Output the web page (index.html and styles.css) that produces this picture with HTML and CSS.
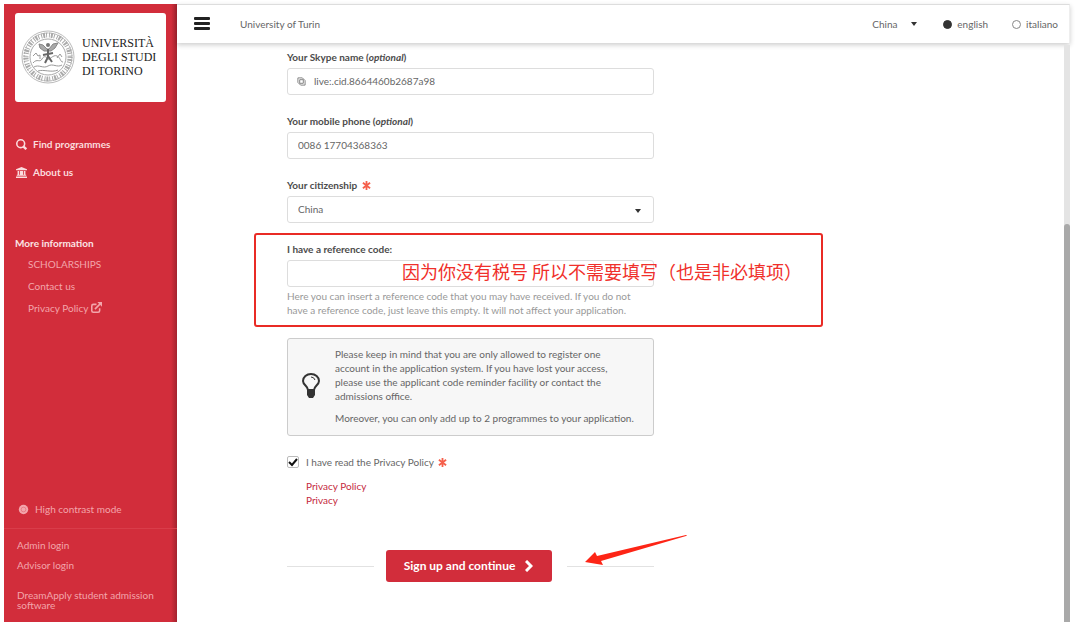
FILE: index.html
```html
<!DOCTYPE html>
<html lang="en">
<head>
    <meta charset="utf-8">
    <title>University of Turin</title>
    <link rel="stylesheet" href="styles.css">
</head>
<body>
<div class="app">
    <aside class="sidebar">
        <a href="#" class="logo">
            <svg class="seal" viewBox="0 0 54 54" fill="none" stroke="#999">
                <circle cx="27" cy="27" r="26" stroke-width="1" stroke="#bbb"/>
                <circle cx="27" cy="27" r="22" stroke-width="5" stroke="#aaa" stroke-dasharray="1 1 2 1 1 2"/>
                <circle cx="27" cy="27" r="24" stroke-width="1" stroke="#aaa" stroke-dasharray="2 1"/>
                <circle cx="27" cy="27" r="18" stroke-width="1" stroke="#aaa"/>
                <path d="M12 33c4-5 7 0 9-4s5-2 6 0 5-5 9-3 3 6 6 6M13 37c5-3 9 2 14-1s9 2 14-1M17 41c6-2 13 2 20-1" stroke-width="1"/>
                <path d="M18 14l4 1 4 4 2 0 4-5 5-1-3 5-4 3-7 0-4-3z" fill="#aaa" stroke="#888"/>
                <path d="M27 19v8l-3 6M27 26l4 6M22 25l10-2" stroke="#666" stroke-width="2"/>
                <circle cx="27" cy="15" r="2" fill="#777" stroke="none"/>
                <path d="M12 26l3-3 2 3 2-1v4M36 28l3-4 2 3" stroke-width="1"/>
            </svg>
            <span class="logo-text">UNIVERSITÀ<br>DEGLI STUDI<br>DI TORINO</span>
        </a>
        <nav class="main-nav">
            <a href="#">
                <svg class="icon" viewBox="0 0 14 14" fill="none" stroke="currentColor" stroke-width="2"><circle cx="6" cy="6" r="5"/><path d="M9 9l4 4" stroke-width="3"/></svg>
                Find programmes
            </a>
            <a href="#">
                <svg class="icon" viewBox="0 0 14 14" fill="currentColor"><path d="M7 0l7 3v1H0V3zM2 5h2v5h1V5h2v5h0V5h2v5h1V5h2v5h1v1H1v-1h1zM0 12h14v2H0z"/></svg>
                About us
            </a>
        </nav>
        <nav class="info-nav">
            <h2>More information</h2>
            <a href="#">SCHOLARSHIPS</a>
            <a href="#">Contact us</a>
            <a href="#">Privacy Policy
                <svg class="ext" viewBox="0 0 14 14" fill="none" stroke="currentColor" stroke-width="2"><path d="M7 3H3a2 2 0 0 0-2 2v6a2 2 0 0 0 2 2h6a2 2 0 0 0 2-2V8M5 9l7-7"/><path d="M8 0h6v6z" fill="currentColor" stroke="none"/></svg>
            </a>
        </nav>
        <a href="#" class="contrast">
            <svg class="icon" viewBox="0 0 14 14"><circle cx="7" cy="7" r="6" fill="currentColor"/><circle cx="7" cy="7" r="3" fill="none" stroke="#d22d3b" opacity=".4"/></svg>
            High contrast mode
        </a>
        <div class="side-footer">
            <a href="#">Admin login</a>
            <a href="#">Advisor login</a>
            <a href="#" class="vendor">DreamApply student admission software</a>
        </div>
    </aside>

    <div class="page">
        <header class="topbar">
            <button type="button" class="menu-btn" aria-label="Menu">
                <svg viewBox="0 0 16 14" fill="#222"><rect width="16" height="3" rx="1"/><rect y="5" width="16" height="3" rx="1"/><rect y="10" width="16" height="3" rx="1"/></svg>
            </button>
            <span class="site-name">University of Turin</span>
            <select class="country" aria-label="Country"><option>China</option></select>
            <label class="lang"><input type="radio" name="lang" checked>english</label>
            <label class="lang"><input type="radio" name="lang">italiano</label>
        </header>

        <div class="content">
            <form class="signup">
                <div class="field">
                    <label for="skype">Your Skype name (<em>optional</em>)</label>
                    <div class="with-icon">
                        <svg viewBox="0 0 10 10" fill="none" stroke="#777"><path d="M1 1h5l3 3v5H4L1 6zM3 3h4v4H3z"/></svg>
                        <input type="text" id="skype" value="live:.cid.8664460b2687a98">
                    </div>
                </div>
                <div class="field">
                    <label for="phone">Your mobile phone (<em>optional</em>)</label>
                    <input type="text" id="phone" value="0086 17704368363">
                </div>
                <div class="field">
                    <label for="citizenship">Your citizenship
                        <svg class="req" viewBox="0 0 10 10"><path d="M5 0v10M1 2l8 6M9 2L1 8"/></svg>
                    </label>
                    <select id="citizenship"><option>China</option></select>
                </div>
                <div class="field noted">
                    <label for="refcode">I have a reference code:</label>
                    <input type="text" id="refcode">
                    <p class="help">Here you can insert a reference code that you may have received. If you do not have a reference code, just leave this empty. It will not affect your application.</p>
                    <div class="note-frame">
                        <span lang="zh">因为你没有税号 所以不需要填写（也是非必填项）</span>
                    </div>
                </div>

                <div class="message">
                    <svg viewBox="0 0 18 26" fill="none" stroke="#333"><path d="M6 17c0-4-5-5-5-9a8 7 0 0 1 16 0c0 4-5 5-5 9z" stroke-width="2"/><path d="M9 4q3 0 4 3" stroke-width="1"/><path d="M5 17h8v5l-2 3H7l-2-3z" fill="#333" stroke="none"/></svg>
                    <div>
                        <p>Please keep in mind that you are only allowed to register one account in the application system. If you have lost your access, please use the applicant code reminder facility or contact the admissions office.</p>
                        <p>Moreover, you can only add up to 2 programmes to your application.</p>
                    </div>
                </div>

                <label class="agree">
                    <input type="checkbox" checked>
                    <span>I have read the Privacy Policy
                        <svg class="req" viewBox="0 0 10 10"><path d="M5 0v10M1 2l8 6M9 2L1 8"/></svg>
                    </span>
                </label>
                <div class="policies">
                    <a href="#">Privacy Policy</a>
                    <a href="#">Privacy</a>
                </div>

                <div class="submit-row">
                    <button type="submit">Sign up and continue
                        <svg viewBox="0 0 8 12" fill="none" stroke="#fff" stroke-width="3"><path d="M1 1l5 5-5 5"/></svg>
                    </button>
                    <svg class="arrow" viewBox="0 0 104 32" fill="#fd2516"><path d="M1 28L11 18l2 4L102 1q2 0 0 1L17 27l2 4z"/></svg>
                </div>
            </form>
            <div class="scroll-track"><div class="scroll-thumb"></div></div>
        </div>
    </div>
</div>
</body>
</html>
```

FILE: styles.css
```css
* {
    box-sizing: border-box;
}
body {
    margin: 0;
    padding: 4px 10px 5px 4px;
    font-family: Lato, "Noto Sans CJK SC", sans-serif;
    font-size: 10px;
    line-height: 14px;
    color: #666;
    background: #fff;
}
a {
    color: inherit;
    text-decoration: none;
}
p, h2 {
    margin: 0;
}
input, select, button {
    font: inherit;
    color: inherit;
    margin: 0;
}
.app {
    display: flex;
    min-height: calc(100vh - 9px);
}

/* sidebar */
.sidebar {
    width: 173px;
    flex-shrink: 0;
    display: flex;
    flex-direction: column;
    background: linear-gradient(to left, #a3232e, #d22d3b 6px);
    color: #f3a5ab;
}
.logo {
    display: flex;
    align-items: center;
    gap: 7px;
    height: 89px;
    margin: 9px 11px 0;
    padding: 0 0 2px 6px;
    border-radius: 3px;
    background: #fff;
}
.seal {
    width: 54px;
    height: 54px;
}
.logo-text {
    font-family: "Liberation Serif", serif;
    font-size: 12px;
    color: #222;
    white-space: nowrap;
}
.icon {
    width: 11px;
    height: 11px;
}
.main-nav {
    display: flex;
    flex-direction: column;
    gap: 14px;
    margin: 35px 0 0 12px;
    font-weight: bold;
    color: #fbdcde;
}
.main-nav a, .contrast {
    display: flex;
    align-items: center;
    gap: 6px;
}
.info-nav {
    display: flex;
    flex-direction: column;
    gap: 8px;
    margin: 57px 0 0 24px;
}
.info-nav h2 {
    margin: 0 0 -1px -13px;
    font-size: 10px;
    color: #fbe4e5;
}
.ext {
    width: 11px;
    height: 11px;
    vertical-align: -1px;
}
.contrast {
    margin: auto 0 12px 14px;
}
.side-footer {
    display: flex;
    flex-direction: column;
    gap: 6px;
    padding: 9px 16px 12px 13px;
    border-top: 1px solid #d93d4a;
}
.vendor {
    margin-top: 12px;
    line-height: 10px;
}

/* top bar */
.page {
    flex: 1;
    display: flex;
    flex-direction: column;
}
.topbar {
    display: flex;
    align-items: center;
    height: 39px;
    padding: 0 11px 0 17px;
    border-top: 1px solid #ddd;
    border-right: 1px solid #eee;
    box-shadow: 0 2px 5px rgba(0, 0, 0, .2);
}
.menu-btn {
    padding: 0;
    border: 0;
    background: none;
    line-height: 0;
}
.menu-btn svg {
    width: 16px;
    height: 14px;
}
.site-name {
    margin: 0 auto 0 30px;
}
select {
    appearance: none;
    background: url("data:image/svg+xml,%3Csvg xmlns='http://www.w3.org/2000/svg' viewBox='0 0 6 4'%3E%3Cpath d='M0 0h6L3 4z' fill='%23333'/%3E%3C/svg%3E") no-repeat right center / 6px 4px;
}
.country {
    width: 45px;
    padding: 0;
    border: 0;
}
.lang {
    display: flex;
    align-items: center;
    gap: 5px;
    margin-left: 26px;
}
.lang + .lang {
    margin-left: 24px;
}
.lang input {
    appearance: none;
    width: 9px;
    height: 9px;
    border: 1px solid #888;
    border-radius: 50%;
}
.lang input:checked {
    border-color: #333;
    background: #333;
}

/* form */
.content {
    flex: 1;
    display: flex;
    justify-content: space-between;
    padding-top: 2px;
}
.signup {
    width: 367px;
    margin: 5px 0 0 110px;
}
.field {
    margin-bottom: 19px;
}
.field > label {
    display: block;
    margin-bottom: 4px;
    font-weight: bold;
    color: #4c4c4c;
}
.field input, .field select {
    display: block;
    width: 100%;
    height: 27px;
    padding: 0 10px 2px;
    border: 1px solid #ddd;
    border-radius: 3px;
    background-color: #fff;
}
.field select {
    background-position: right 12px top 12px;
}
.with-icon {
    position: relative;
}
.with-icon svg {
    position: absolute;
    left: 10px;
    top: 9px;
    width: 9px;
    height: 9px;
}
.field .with-icon input {
    padding-left: 26px;
}
.req {
    width: 9px;
    height: 9px;
    margin-left: 2px;
    vertical-align: -1px;
    stroke: #f5604c;
    stroke-width: 2;
}
.help {
    margin-top: 2px;
    padding-right: 15px;
    color: #999;
}
.noted {
    position: relative;
}
.note-frame {
    position: absolute;
    top: -9px;
    left: -33px;
    width: 569px;
    height: 94px;
    padding: 22px 0 0 146px;
    border: 2px solid #e92b25;
    border-radius: 3px;
    font-family: "Noto Sans CJK SC", sans-serif;
    font-size: 18px;
    line-height: 28px;
    color: #f0302b;
    white-space: nowrap;
    pointer-events: none;
}
.message {
    display: flex;
    align-items: center;
    gap: 15px;
    margin-top: 21px;
    padding: 8px 17px 10px 14px;
    border: 1px solid #ccc;
    border-radius: 3px;
    background: #f7f7f7;
}
.message svg {
    width: 18px;
    height: 26px;
    flex-shrink: 0;
}
.message p + p {
    margin-top: 8px;
}
.agree {
    display: flex;
    align-items: center;
    gap: 7px;
    margin-top: 19px;
}
.agree input {
    appearance: none;
    width: 12px;
    height: 12px;
    border: 1px solid #bbb;
    border-radius: 2px;
    background: url("data:image/svg+xml,%3Csvg xmlns='http://www.w3.org/2000/svg' viewBox='0 0 10 10'%3E%3Cpath d='M1 5l3 3 5-6' fill='none' stroke='%23111' stroke-width='2'/%3E%3C/svg%3E") center / 10px 10px no-repeat;
}
.policies {
    display: flex;
    flex-direction: column;
    align-items: flex-start;
    margin: 10px 0 0 19px;
    color: #c52a40;
}
.submit-row {
    position: relative;
    display: flex;
    align-items: center;
    margin-top: 43px;
}
.submit-row::before, .submit-row::after {
    content: "";
    flex: 1;
    border-top: 1px solid #e2e2e2;
}
.submit-row button {
    display: flex;
    align-items: center;
    gap: 10px;
    height: 32px;
    margin: 0 15px 0 12px;
    padding: 0 19px 0 18px;
    border: 0;
    border-radius: 3px;
    background: #d22d3b;
    color: #fff;
    font-size: 12px;
    font-weight: bold;
}
.submit-row button svg {
    width: 8px;
    height: 12px;
}
.arrow {
    position: absolute;
    left: 297px;
    top: -16px;
    width: 104px;
    height: 32px;
}
.scroll-track {
    display: flex;
    flex-direction: column;
    justify-content: flex-end;
    width: 6px;
    background: #e4e4e4;
}
.scroll-thumb {
    height: 69%;
    border-radius: 3px 3px 0 0;
    background: #a9a9a9;
}
```
